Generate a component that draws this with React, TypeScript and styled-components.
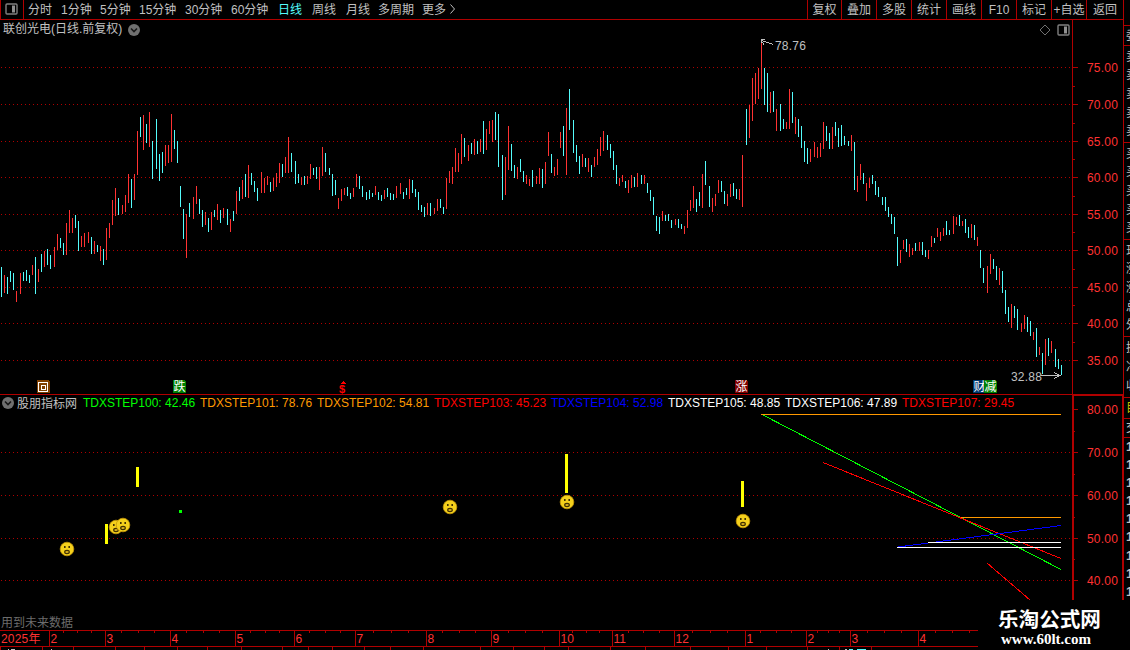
import { Fragment } from "react";
import styled, { createGlobalStyle } from "styled-components";

const LINE = "#b00000";
const UP = "#ff3232";
const DOWN = "#54fcfc";
const TEXT = "#c0c0c0";

const GlobalStyle = createGlobalStyle`
  * {
    box-sizing: border-box;
  }
  body {
    margin: 0;
    background: #000;
    font-family: "Liberation Sans", "Noto Sans CJK SC", sans-serif;
    font-size: 12px;
    color: ${TEXT};
    overflow: hidden;
  }
  svg {
    display: block;
  }
`;

const Wrapper = styled.div`
  position: relative;
  display: flex;
  width: 1130px;
  height: 650px;
  overflow: hidden;
`;

const Main = styled.div`
  display: flex;
  flex-direction: column;
  width: 1123px;
  flex: none;
`;

const Toolbar = styled.div`
  display: flex;
  height: 20px;
  line-height: 20px;
  border-bottom: 1px solid ${LINE};
  white-space: nowrap;
`;

const PanelToggle = styled.div`
  width: 24px;
  margin-right: 4px;
  padding: 3px 0 0 4px;
  border: solid ${LINE};
  border-width: 0 1px;
`;

const Period = styled.div<{ $width: number; $active?: boolean }>`
  width: ${(props) => props.$width}px;
  color: ${(props) => (props.$active ? DOWN : TEXT)};
`;

const Actions = styled.div`
  display: flex;
  width: 316px;
  margin-left: auto;
`;

const Action = styled.div`
  width: 35px;
  border-left: 1px solid ${LINE};
  text-align: center;
  &:first-child {
    width: 34px;
  }
  &:last-child {
    width: 37px;
  }
`;

const StockHeader = styled.div`
  display: flex;
  align-items: center;
  height: 19px;
  width: 1073px;
  padding: 0 2px 0 3px;
  border-right: 1px solid ${LINE};
`;

const StockName = styled.div`
  width: 125px;
  line-height: 16px;
  padding-bottom: 2px;
  white-space: nowrap;
`;

const HeaderIcons = styled.div`
  display: flex;
  gap: 6px;
  margin-left: auto;
`;

const Legend = styled.div`
  display: flex;
  align-items: center;
  height: 16px;
  padding-left: 2px;
  white-space: nowrap;
`;

const LegendName = styled.div`
  width: 66px;
  margin-left: 3px;
  padding-bottom: 2px;
`;

const LegendItem = styled.div<{ $color: string }>`
  width: 117px;
  color: ${(props) => props.$color};
`;

const Notice = styled.div`
  height: 20px;
  padding-left: 1px;
  line-height: 26px;
  color: #6c6c6c;
`;

const Sidebar = styled.div`
  display: flex;
  flex-direction: column;
  width: 7px;
  border-left: 1px solid ${LINE};
  overflow: hidden;
`;

const QuoteGroup = styled.div<{ $height: number; $color?: string }>`
  display: flex;
  flex: none;
  flex-direction: column;
  justify-content: space-evenly;
  width: 20px;
  height: ${(props) => props.$height}px;
  padding-left: 2px;
  border-bottom: 1px solid ${LINE};
  line-height: 16px;
  color: ${(props) => props.$color || TEXT};
`;

const Ticks = styled.div`
  width: 20px;
  padding-left: 2px;
  font-size: 13px;
  font-weight: bold;
  line-height: 18.1px;
`;

const Watermark = styled.div`
  position: absolute;
  left: 978px;
  top: 600px;
  width: 152px;
  height: 50px;
  padding: 5px 0 0 20px;
  background: #000;
  color: #fff;
`;

const SiteName = styled.div`
  font: bold 20.6px/26px "Noto Sans CJK SC", sans-serif;
  white-space: nowrap;
`;

const SiteUrl = styled.div`
  padding-left: 3px;
  font: bold 15px/16px "Liberation Serif", serif;
`;

const periods: [string, number][] = [
  ["分时", 33],
  ["1分钟", 39],
  ["5分钟", 39],
  ["15分钟", 46],
  ["30分钟", 46],
  ["60分钟", 47],
  ["日线", 34],
  ["周线", 34],
  ["月线", 32],
  ["多周期", 44],
  ["更多", 27],
];

const actions = ["复权", "叠加", "多股", "统计", "画线", "F10", "标记", "+自选", "返回"];

const legend: [string, string][] = [
  ["TDXSTEP100: 42.46", "#00ff00"],
  ["TDXSTEP101: 78.76", "#ff9900"],
  ["TDXSTEP102: 54.81", "#ff9900"],
  ["TDXSTEP103: 45.23", "#ff0000"],
  ["TDXSTEP104: 52.98", "#0000ff"],
  ["TDXSTEP105: 48.85", "#ffffff"],
  ["TDXSTEP106: 47.89", "#ffffff"],
  ["TDXSTEP107: 29.45", "#ff0000"],
];

// x, top, bottom, direction (R = up, C = down)
const bars = `
1 267 297 C,4 275 293 R,7 277 294 C,10 271 282 C,13 273 290 C,16 291 302 R,20 273 294 R,23 272 281 C,
26 270 281 C,29 275 283 C,32 265 275 R,35 257 294 C,38 269 282 R,41 254 272 C,44 251 267 R,47 249 265 C,
50 255 269 C,54 247 267 R,57 234 250 R,60 238 248 C,63 243 255 C,66 223 255 R,69 210 233 R,72 218 233 R,
75 215 228 C,78 221 251 C,81 236 247 R,84 233 247 R,88 232 243 R,91 237 254 C,94 241 254 R,97 245 252 C,
100 246 261 R,103 249 265 C,106 228 260 R,109 223 238 R,112 200 225 R,115 188 216 R,118 198 215 C,122 205 214 R,
125 195 212 R,128 174 203 R,131 179 208 C,134 174 200 R,137 131 175 R,140 117 137 C,143 115 150 R,146 124 143 C,
149 112 147 R,152 141 179 C,156 119 169 C,159 154 181 C,162 152 173 C,165 145 166 R,168 145 163 R,171 114 162 R,
174 130 149 C,177 141 163 C,180 186 207 C,183 209 239 C,186 214 258 R,189 203 217 C,193 197 219 R,196 186 204 R,
199 199 214 C,202 210 227 C,205 212 225 R,208 218 232 C,211 212 230 R,214 210 217 C,217 204 220 R,220 210 223 C,
223 208 218 R,227 209 225 C,230 219 232 R,233 211 221 C,236 191 214 R,239 187 201 C,242 180 199 R,245 174 197 C,
248 165 198 R,251 173 185 C,254 181 192 C,257 188 201 C,261 172 193 R,264 178 193 R,267 176 185 R,270 182 192 C,
273 178 191 R,276 173 187 R,279 163 183 R,282 164 177 C,285 157 173 R,288 137 173 R,291 153 172 C,295 161 184 C,
298 174 183 C,301 177 185 R,304 176 185 C,307 176 184 R,310 164 179 R,313 168 175 C,316 167 179 C,319 167 190 R,
322 147 176 R,325 153 172 C,329 168 175 C,332 174 196 C,335 180 195 C,338 198 209 R,341 189 201 R,344 188 195 R,
347 187 196 C,350 193 199 C,353 188 197 R,356 174 187 R,359 176 189 C,362 186 197 C,366 192 200 C,369 190 199 C,
372 193 197 C,375 186 195 R,378 192 200 C,381 195 201 C,384 190 199 R,387 188 197 C,390 193 200 C,393 194 200 C,
396 186 198 R,400 183 194 R,403 192 199 C,406 188 195 C,409 179 199 R,412 180 193 C,415 189 197 C,418 192 210 C,
421 205 212 C,424 207 217 C,427 203 215 R,430 203 216 C,434 208 214 R,437 199 211 R,440 199 208 C,443 207 214 C,
446 178 209 R,449 171 183 R,452 167 184 R,455 148 172 R,458 153 172 R,461 134 164 R,464 138 157 C,468 145 161 R,
471 143 154 C,474 139 155 R,477 141 154 C,480 139 152 R,483 121 154 C,486 129 150 R,489 121 134 R,492 120 142 R,
495 112 140 C,498 114 167 C,502 155 200 C,505 157 195 R,508 126 170 R,511 144 171 C,514 165 178 C,517 167 179 R,
520 159 172 C,523 171 182 C,526 175 184 R,529 179 186 R,532 170 187 C,536 176 184 R,539 168 184 R,542 169 188 C,
545 162 184 R,548 132 156 R,551 154 173 C,554 167 176 R,557 159 175 R,560 132 148 R,563 126 156 C,566 108 175 R,
569 89 130 C,573 120 153 C,576 145 162 C,579 156 174 C,582 154 167 R,585 158 167 C,588 158 172 R,591 165 177 C,
594 157 167 R,597 149 165 R,600 137 156 R,603 131 151 R,607 135 150 C,610 144 158 C,613 151 170 C,616 165 184 C,
619 178 186 R,622 175 182 R,625 181 188 C,628 180 193 R,631 175 188 R,634 177 187 C,637 173 187 R,641 175 184 C,
644 175 184 R,647 183 193 C,650 190 201 C,653 197 215 C,656 216 231 C,659 217 234 C,662 211 221 R,665 215 221 C,
668 214 221 C,671 220 228 C,675 219 225 R,678 219 228 C,681 224 229 C,684 226 234 R,687 210 228 R,690 200 211 R,
693 186 208 R,696 199 212 C,699 192 206 C,702 174 208 R,705 161 185 C,709 186 207 C,712 198 212 R,715 194 206 R,
718 180 193 R,721 181 192 C,724 191 204 C,727 194 206 R,730 184 197 R,733 183 196 C,736 189 199 C,739 189 200 R,
742 155 207 R,746 109 145 C,749 105 138 R,752 78 121 R,755 73 104 R,758 68 99 R,761 43 89 R,764 68 105 C,
767 73 112 C,770 92 113 R,773 91 112 C,776 109 131 R,780 104 131 C,783 119 129 C,786 122 129 R,789 89 129 R,
792 92 123 C,795 117 134 R,798 119 137 C,801 126 148 C,804 141 162 C,807 148 164 C,810 149 162 R,814 142 157 R,
817 147 158 R,820 143 157 R,823 122 149 R,826 126 141 C,829 133 149 C,832 127 149 R,835 122 136 C,838 128 147 C,
841 125 146 C,844 136 145 C,848 141 146 C,851 135 151 R,854 142 190 C,857 176 192 R,860 164 180 R,863 173 184 C,
866 183 201 R,869 178 188 R,872 175 184 C,875 181 195 C,878 187 197 C,882 197 205 C,885 197 211 C,888 207 217 C,
891 214 224 C,894 217 234 C,897 237 266 C,900 250 263 R,903 240 249 R,906 239 252 C,909 244 257 R,912 248 255 R,
915 243 251 C,919 242 251 R,922 242 255 C,925 250 257 C,928 250 259 R,931 236 247 R,934 238 243 C,937 228 237 R,
940 232 241 R,943 228 236 R,946 221 235 C,949 230 235 C,953 216 234 R,956 217 225 R,959 215 226 C,962 221 226 R,
965 219 233 C,968 227 238 C,971 224 238 R,974 225 240 C,977 237 246 R,980 250 268 C,983 268 283 C,987 266 293 R,
990 254 274 R,993 259 269 C,996 266 280 C,999 268 285 R,1002 271 293 C,1005 290 314 C,1008 307 322 C,1011 304 328 R,
1014 306 318 C,1017 309 330 C,1021 323 332 R,1024 315 329 R,1027 317 332 C,1030 321 336 C,1033 332 340 R,1036 328 357 C,
1039 347 355 R,1042 353 374 C,1045 339 365 R,1048 338 356 C,1051 341 353 R,1055 349 367 C,1058 359 369 C,1061 365 375 C
`
  .trim()
  .split(",")
  .map((row) => {
    const [x, top, bottom, dir] = row.trim().split(" ");
    return { x: +x, top: +top, bottom: +bottom, color: dir === "R" ? UP : DOWN };
  });

const priceLevels: [number, string][] = [
  [67, "75.00"],
  [104, "70.00"],
  [141, "65.00"],
  [177, "60.00"],
  [214, "55.00"],
  [250, "50.00"],
  [287, "45.00"],
  [323, "40.00"],
  [360, "35.00"],
];

const stepLevels: [number, string][] = [
  [409, "80.00"],
  [452, "70.00"],
  [495, "60.00"],
  [538, "50.00"],
  [580, "40.00"],
];

const badges: [number, string, string][] = [
  [37, "回", "#804000"],
  [173, "跌", "#008000"],
  [735, "涨", "#800000"],
  [973, "财", "#003870"],
  [984, "减", "#008000"],
];

const faces = [
  [67, 549],
  [116, 527],
  [123, 525],
  [450, 507],
  [567, 502],
  [743, 521],
];

const months: [number, string][] = [
  [49, "2"],
  [105, "3"],
  [170, "4"],
  [235, "5"],
  [294, "6"],
  [355, "7"],
  [426, "8"],
  [491, "9"],
  [559, "10"],
  [612, "11"],
  [674, "12"],
  [745, "1"],
  [806, "2"],
  [850, "3"],
  [918, "4"],
  [986, ""],
];

const bottomTicks = [
  0, 42, 73, 115, 144, 177, 207, 241, 282, 308, 332, 364, 390, 423, 480, 513, 544, 568, 610, 645,
  690, 728, 766, 807, 839, 871,
];

const Levels = ({ levels, skip }: { levels: [number, string][]; skip?: number }) => (
  <>
    {levels.map(([y, label], i) => (
      <Fragment key={label}>
        {y !== skip && (
          <line x1="1" x2="1071" y1={y + 0.5} y2={y + 0.5} stroke={LINE} strokeDasharray="1 3" />
        )}
        <rect x="1072" y={y} width="6" height="1" fill={LINE} />
        {levels[i + 1] && (
          <rect x="1072" y={Math.round((y + levels[i + 1][0]) / 2)} width="3" height="1" fill={LINE} />
        )}
        <text x="1087" y={y + 5} fill={UP} letterSpacing="0.2">
          {label}
        </text>
      </Fragment>
    ))}
  </>
);

const Collapse = () => (
  <svg width="12" height="12" viewBox="0 0 12 12">
    <circle cx="6" cy="6" r="6" fill="#707070" />
    <path d="M3 4.5l3 3 3-3" fill="none" stroke="#181818" strokeWidth="1.6" />
  </svg>
);

const PanelIcon = () => (
  <svg width="13" height="12" viewBox="0 0 13 12">
    <rect x="1" y="1" width="11" height="10" rx="1" fill="none" stroke="#808080" strokeWidth="1.4" />
    <rect x="7" y="2.5" width="3" height="7" fill="#909090" />
  </svg>
);

const PriceChart = () => (
  <svg width="1123" height="356" viewBox="0 39 1123 356" shapeRendering="crispEdges">
    <Levels levels={priceLevels} />
    {bars.map((bar) => (
      <rect key={bar.x} x={bar.x} y={bar.top} width="1" height={bar.bottom - bar.top} fill={bar.color} />
    ))}
    <g stroke={TEXT} fill="none">
      <path d="M761.5 43V39.5H765M762 40.5L773 44.5M762 42L764 44.5" />
      <path d="M1041 375.5H1060M1054 372.5L1060 375.5L1054 378.5" />
    </g>
    <text x="775" y="50" fill={TEXT} letterSpacing="0.2">
      78.76
    </text>
    <text x="1011" y="381" fill={TEXT} letterSpacing="0.2">
      32.88
    </text>
    {badges.map(([x, label, color]) => (
      <g key={label}>
        <path d={`M${x} 380h11l2 2v11h-13z`} fill={color} />
        {label === "回" ? (
          <path d={`M${x + 1.5} 382.5h9v9h-9zM${x + 4} 385h4v4h-4z`} fill="none" stroke="#fff" />
        ) : (
          <text x={x + 0.5} y="391" fill="#fff">
            {label}
          </text>
        )}
      </g>
    ))}
    <text x="339" y="393" fill="#f00" fontSize="11" fontWeight="bold">
      $
    </text>
    <path d="M340 384l3-3 3 3z" fill="#f00" />
    <rect x="1072" y="39" width="1" height="356" fill={LINE} />
    <rect x="0" y="394" width="1123" height="1" fill={LINE} />
  </svg>
);

const StepChart = () => (
  <svg width="1123" height="199" viewBox="0 411 1123 199" overflow="visible" shapeRendering="crispEdges">
    <path d="M1073 610V395H1123V610" fill="none" stroke={LINE} strokeWidth="2" />
    <Levels levels={stepLevels} skip={409} />
    <g fill="none">
      <path d="M762 414.5L1061 569.5" stroke="#00ff00" />
      <path d="M761 414.5H1061" stroke="#ff9900" />
      <path d="M960 517.5H1061" stroke="#ff9900" />
      <path d="M823 462.5L1061 558.5M987 563L1030 600" stroke="#ff0000" />
      <path d="M898 547L1061 525.5" stroke="#0000ff" />
      <path d="M928 542.5H1061M897 547.5H1061" stroke="#ffffff" />
    </g>
    <g fill="#ffff00">
      <rect x="136" y="467" width="3" height="20" />
      <rect x="105" y="524" width="3" height="20" />
      <rect x="565" y="454" width="3" height="39" />
      <rect x="741" y="481" width="3" height="26" />
    </g>
    <rect x="179" y="510" width="3" height="3" fill="#00ff00" />
    {faces.map(([x, y]) => (
      <g key={x} transform={`translate(${x} ${y})`} shapeRendering="auto">
        <circle r="6.8" fill="#f4d01c" stroke="#c89808" strokeWidth="0.8" />
        <path d="M-3 -3h1.6v2h-1.6zM1.4 -3h1.6v2h-1.6z" fill="#403000" />
        <ellipse cy="3" rx="2.3" ry="1.6" fill="#d8b020" stroke="#403000" strokeWidth="1.2" />
      </g>
    ))}
  </svg>
);

const DateAxis = () => (
  <svg width="1123" height="20" viewBox="0 630 1123 20" shapeRendering="crispEdges">
    <rect y="630" width="1123" height="1" fill={LINE} />
    <rect y="646" width="1123" height="1" fill={LINE} />
    <text x="1" y="643" fill={UP} letterSpacing="0.2">
      2025年
    </text>
    {months.slice(0, -1).map(([x, label], i) => {
      const step = (months[i + 1][0] - x) / 4;
      return (
        <Fragment key={x}>
          <rect x={x} y="630" width="1" height="16" fill={LINE} />
          {[1, 2, 3].map((n) => (
            <rect key={n} x={Math.round(x + step * n)} y="630" width="1" height="3" fill={LINE} />
          ))}
          <text x={x + 1.5} y="643" fill={UP}>
            {label}
          </text>
        </Fragment>
      );
    })}
    {bottomTicks.map((x) => (
      <rect key={x} x={x} y="647" width="1" height="3" fill={LINE} />
    ))}
    <path d="M8 649.5h1M11 649.5h4M51 649.5h1M828 649.5h1M845 649.5h2" stroke={TEXT} />
    <path d="M849 649.5h4M857 649.5h9" stroke={DOWN} />
  </svg>
);

const quoteGroups: { labels: string; height: number; color?: string }[] = [
  { labels: "", height: 26 },
  { labels: "委", height: 20 },
  { labels: "卖卖卖卖卖", height: 97 },
  { labels: "买买买买买", height: 97 },
  { labels: "现涨涨总外", height: 97 },
  { labels: "换净收", height: 61 },
  { labels: "目", height: 21, color: "#c0c000" },
  { labels: "交", height: 19 },
];

function App() {
  return (
    <Wrapper>
      <GlobalStyle />
      <Main>
        <Toolbar>
          <PanelToggle>
            <PanelIcon />
          </PanelToggle>
          {periods.map(([label, width]) => (
            <Period key={label} $width={width} $active={label === "日线"}>
              {label}
            </Period>
          ))}
          <svg width="8" height="18" viewBox="0 0 8 18">
            <path d="M1.5 4.5l4 4.5-4 4.5" fill="none" stroke={TEXT} />
          </svg>
          <Actions>
            {actions.map((label) => (
              <Action key={label}>{label}</Action>
            ))}
          </Actions>
        </Toolbar>
        <StockHeader>
          <StockName>联创光电(日线.前复权)</StockName>
          <Collapse />
          <HeaderIcons>
            <svg width="12" height="12" viewBox="0 0 12 12">
              <path d="M6 1l5 5-5 5-5-5z" fill="none" stroke="#707070" />
            </svg>
            <PanelIcon />
          </HeaderIcons>
        </StockHeader>
        <PriceChart />
        <Legend>
          <Collapse />
          <LegendName>股朋指标网</LegendName>
          {legend.map(([label, color]) => (
            <LegendItem key={label} $color={color}>
              {label}
            </LegendItem>
          ))}
        </Legend>
        <StepChart />
        <Notice>用到未来数据</Notice>
        <DateAxis />
      </Main>
      <Sidebar>
        {quoteGroups.map((group, i) => (
          <QuoteGroup key={i} $height={group.height} $color={group.color}>
            {group.labels.split("").map((label, n) => (
              <div key={n}>{label}</div>
            ))}
          </QuoteGroup>
        ))}
        <Ticks>
          {Array.from({ length: 9 }, (_, i) => (
            <div key={i}>1</div>
          ))}
        </Ticks>
      </Sidebar>
      <Watermark>
        <SiteName>乐淘公式网</SiteName>
        <SiteUrl>www.60lt.com</SiteUrl>
      </Watermark>
    </Wrapper>
  );
}

export default App;
